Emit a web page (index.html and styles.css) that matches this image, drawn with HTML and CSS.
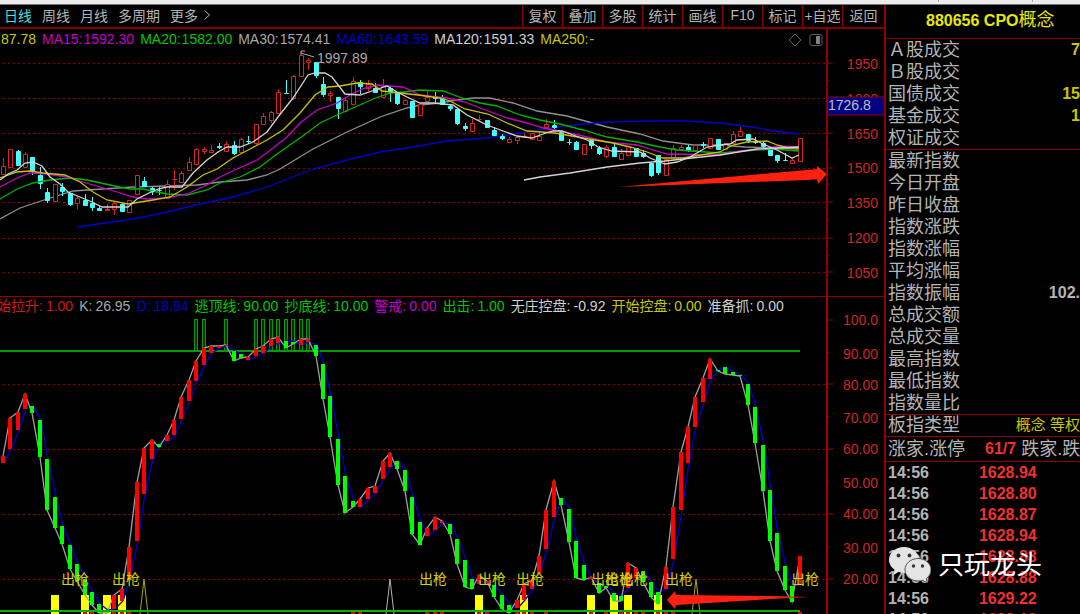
FILE: index.html
```html
<!DOCTYPE html>
<html lang="zh-CN">
<head>
<meta charset="utf-8">
<title>880656 CPO概念</title>
<link rel="stylesheet" href="styles.css">
</head>
<body>
<div class="app">
  <div class="strip"><i></i><i></i></div>
  <div class="workspace">
    <main class="charts">
      <div class="toolbar">
        <nav class="periods">
          <button class="period active">日线</button>
          <button class="period">周线</button>
          <button class="period">月线</button>
          <button class="period">多周期</button>
          <button class="period more">更多<svg class="chevron" viewBox="0 0 8 12"><path d="M1.500 1.500 6.500 6 1.500 10.500"/></svg></button>
        </nav>
        <div class="tools">
          <button>复权</button><button>叠加</button><button>多股</button><button>统计</button><button>画线</button><button>F10</button><button>标记</button><button>+自选</button><button>返回</button>
        </div>
      </div>

      <section class="panel price">
        <div class="plot">
          <div class="legend ma">
            <span class="c-yellow">87.78</span>
            <span class="c-magenta">MA15:<b>1592.30</b></span>
            <span class="c-green">MA20:<b>1582.00</b></span>
            <span class="c-gray">MA30:<b>1574.41</b></span>
            <span class="c-blue">MA60:<b>1643.59</b></span>
            <span class="c-white">MA120:<b>1591.33</b></span>
            <span class="c-yellow">MA250:<b>-</b></span>
            <svg class="legend-icons" viewBox="0 0 36 14"><path d="M7 1 13 7 7 13 1 7z"/><rect x="22" y="1.500" width="12" height="11" rx="2"/><rect class="fill" x="28" y="3" width="4" height="8"/></svg>
          </div>
          <svg class="chart" viewBox="0 49 826 247">
            <g id="price-grid" class="grid"></g>
            <polyline class="ma30" points="0,219 20,208 47,199 73,191 103,189 133,187 167,186 197,185 220,182 247,180 267,175 280,169 313,149 347,132 380,117 407,108 420,105 440,103 457,100 473,98 490,98 513,103 537,111 567,116 607,127 640,134 663,141 693,145 720,145 745,147 799,149"/>
            <polyline class="ma60" points="77,227 133,219 167,212 200,204 233,197 267,187 280,182 313,169 347,160 380,152 413,147 447,141 487,138 520,133 563,126 607,122 647,121 687,121 720,123 753,127 773,131 799,134"/>
            <g id="candles"></g>
            <polyline class="ma20" points="0,199 17,189 33,183 50,180 70,178 87,180 110,185 130,189 143,189 167,194 187,195 207,190 220,183 240,177 260,167 277,154 300,138 320,123 337,115 353,108 373,99 390,93 403,92 420,90 443,91 462,98 480,103 497,106 520,115 540,120 560,124 583,130 607,137 637,142 660,147 677,150 720,153 743,151 773,149 799,151"/>
            <polyline class="ma15" points="0,187 17,178 30,173 47,174 67,177 83,182 100,187 117,192 133,197 147,199 167,198 187,194 207,185 220,177 237,169 257,160 273,148 287,137 300,123 317,110 337,103 350,95 362,89 377,85 403,87 420,95 447,98 465,102 480,108 507,118 527,123 543,128 560,131 583,136 607,142 637,145 650,149 667,154 720,155 740,151 760,149 780,146 799,147"/>
            <polyline class="ma10" points="0,178 17,172 30,171 43,173 65,175 80,182 93,192 107,200 128,204 153,200 170,197 187,187 203,175 217,169 233,158 250,149 267,140 283,130 300,113 315,95 328,87 340,86 357,83 372,84 382,91 400,93 418,95 440,98 450,101 465,109 488,114 507,123 527,131 555,133 583,138 613,143 630,147 647,152 663,158 683,158 720,152 733,145 747,142 767,141 777,145 788,148 799,148"/>
            <polyline class="ma5" points="0,180 8,174 17,170 25,163 33,162 42,166 50,177 60,184 68,192 80,197 92,202 102,207 128,207 137,199 147,194 158,189 167,187 182,187 193,173 207,160 218,152 227,147 240,147 253,142 267,132 278,117 293,98 308,75 315,73 325,73 332,77 345,94 360,95 375,90 387,86 397,92 407,97 420,103 433,103 453,105 467,115 487,125 503,131 517,136 532,138 543,134 553,131 562,131 573,135 587,140 598,147 612,151 640,152 650,158 665,164 677,162 690,157 707,147 720,145 730,144 737,140 753,139 763,144 777,150 792,158 799,155"/>
            <polyline class="ma120" points="524,180 540,177 570,173 607,167 640,163 665,161 683,159 720,155 757,149 799,147"/>
            <path class="pointer" d="M314 57 301 53M305 51H301V55"/>
            <text class="peak" x="317" y="63">1997.89</text>
            <path class="arrow" d="M618 187 807 170 817 169 817 166 827 174 818 184 817 179 807 180z"/>
          </svg>
        </div>
        <svg class="axis" viewBox="828 29 56 267">
          <path d="M828 63h5M828 98h5M828 133h5M828 168h5M828 202h5M828 238h5M828 272h5M828 81h2M828 115h2M828 150h2M828 185h2M828 220h2M828 255h2"/>
          <text x="878" y="69">1950</text><text x="878" y="104">1800</text><text x="878" y="139">1650</text><text x="878" y="173">1500</text><text x="878" y="208">1350</text><text x="878" y="243">1200</text><text x="878" y="278">1050</text>
          <rect class="tag" x="827" y="97" width="60" height="18"/>
          <text class="tag-text" x="828" y="110">1726.8</text>
        </svg>
      </section>

      <section class="panel signal">
        <div class="plot">
          <div class="legend kd">
            <span class="c-red">始拉升:<b>1.00</b></span>
            <span class="c-gray">K:<b>26.95</b></span>
            <span class="c-blue">D:<b>18.94</b></span>
            <span class="c-green">逃顶线:<b>90.00</b></span>
            <span class="c-green">抄底线:<b>10.00</b></span>
            <span class="c-magenta">警戒:<b>0.00</b></span>
            <span class="c-green">出击:<b>1.00</b></span>
            <span class="c-white">无庄控盘:<b>-0.92</b></span>
            <span class="c-yellow">开始控盘:<b>0.00</b></span>
            <span class="c-white">准备抓:<b>0.00</b></span>
          </div>
          <svg class="chart" viewBox="0 317 826 297">
            <g id="signal-grid" class="grid"></g>
            <g id="warnings" class="warnings"></g>
            <path class="limit" d="M0 351H800"/>
            <g id="blocks" class="blocks"></g>
            <path class="spike" d="M140 614 144 579 148 614M692 614 696 579 700 614"/>
            <path class="spike white" d="M386 614 390 579 394 614"/>
            <g id="marks" class="marks"></g>
            <polyline id="d-line" class="d-line"/>
            <polyline id="k-line" class="k-line"/>
            <g id="bars"></g>
            <path class="limit low" d="M0 611H800"/>
            <g id="shots" class="shots"></g>
            <path class="arrow" d="M667 600 675 591 676 595 770 596 809 597 770 599 676 605 675 609z"/>
          </svg>
        </div>
        <svg class="axis" viewBox="828 297 56 317">
          <path d="M828 320h5M828 384h5M828 449h5M828 514h5M828 579h5M828 353h2M828 417h2M828 482h2M828 547h2"/>
          <text x="878" y="325">100.0</text><text x="878" y="359">90.00</text><text x="878" y="390">80.00</text><text x="878" y="423">70.00</text><text x="878" y="454">60.00</text><text x="878" y="488">50.00</text><text x="878" y="519">40.00</text><text x="878" y="553">30.00</text><text x="878" y="584">20.00</text>
        </svg>
      </section>
    </main>

    <aside class="side">
      <h1 class="title">880656 CPO<span>概念</span></h1>
      <dl class="quotes">
        <div><dt>Ａ股成交</dt><dd class="c-yellow">7</dd></div>
        <div><dt>Ｂ股成交</dt><dd></dd></div>
        <div><dt>国债成交</dt><dd class="c-yellow">15</dd></div>
        <div><dt>基金成交</dt><dd class="c-yellow">1</dd></div>
        <div><dt>权证成交</dt><dd></dd></div>
      </dl>
      <dl class="quotes">
        <div><dt>最新指数</dt><dd></dd></div>
        <div><dt>今日开盘</dt><dd></dd></div>
        <div><dt>昨日收盘</dt><dd></dd></div>
        <div><dt>指数涨跌</dt><dd></dd></div>
        <div><dt>指数涨幅</dt><dd></dd></div>
        <div><dt>平均涨幅</dt><dd></dd></div>
        <div><dt>指数振幅</dt><dd>102.</dd></div>
        <div><dt>总成交额</dt><dd></dd></div>
        <div><dt>总成交量</dt><dd></dd></div>
        <div><dt>最高指数</dt><dd></dd></div>
        <div><dt>最低指数</dt><dd></dd></div>
        <div><dt>指数量比</dt><dd></dd></div>
      </dl>
      <dl class="quotes kind">
        <div><dt>板指类型</dt><dd class="c-yellow">概念 等权</dd></div>
      </dl>
      <div class="breadth"><span>涨家.涨停</span><strong>61/7</strong><span>跌家.跌</span></div>
      <div class="ticks">
        <table>
          <tr><td>14:56</td><td>1628.94</td></tr>
          <tr><td>14:56</td><td>1628.80</td></tr>
          <tr><td>14:56</td><td>1628.87</td></tr>
          <tr><td>14:56</td><td>1628.94</td></tr>
          <tr><td>14:56</td><td>1628.88</td></tr>
          <tr><td>14:56</td><td>1628.88</td></tr>
          <tr><td>14:56</td><td>1629.22</td></tr>
          <tr><td>14:56</td><td>1629.13</td></tr>
        </table>
      </div>
      <div class="watermark">
        <svg viewBox="0 0 42 36"><path class="bubble" d="M15 0C6.500 0 0 5.500 0 12.800c0 4.200 2.200 7.600 5.500 10L4.200 28l5.300-2.900c1.800.5 3.500.8 5.500.8 8.400 0 15-5.800 15-13S23.400 0 15 0z"/><path class="bubble front" d="M29 11.500c-7.200 0-13 5-13 11.300 0 6.200 5.800 11.200 13 11.200 1.600 0 3-.3 4.500-.7L38.500 36l-1.300-4.300c3-2.200 4.800-5.300 4.800-8.900 0-6.300-5.800-11.300-13-11.300z"/><g class="eyes"><circle cx="9.500" cy="8.500" r="1.900"/><circle cx="20.500" cy="8.500" r="1.900"/><circle cx="24.500" cy="19" r="1.700"/><circle cx="33.500" cy="19" r="1.700"/></g></svg>
        <span>只玩龙头</span>
      </div>
    </aside>
  </div>
</div>
<script src="chart.js"></script>
</body>
</html>
```
FILE: styles.css
```css
* { box-sizing: border-box; }

body {
  margin: 0;
  background: #000;
  color: #b4b4b4;
  font-family: "Liberation Sans", "Noto Sans CJK SC", sans-serif;
  font-size: 14px;
}

button {
  padding: 0;
  border: 0;
  background: none;
  color: inherit;
  font: inherit;
  white-space: nowrap;
}

.app {
  display: flex;
  flex-direction: column;
  height: 100vh;
  overflow: hidden;
}

.strip {
  display: flex;
  justify-content: flex-end;
  gap: 93px;
  height: 5px;
  flex: none;
  padding-right: 47px;
  background: #ececec;
  border-bottom: 1px solid #777;
}
.strip i { width: 1px; height: 2px; background: #aaa; }

.workspace { display: flex; flex: 1; min-height: 0; }
.charts { flex: 1; min-width: 0; }

.toolbar {
  display: flex;
  justify-content: space-between;
  height: 24px;
  border-bottom: 2px solid #800000;
}
.periods { display: flex; gap: 10px; padding-left: 4px; }
.periods button, .tools button { padding-bottom: 2px; }
.period.active { color: #4fdede; }
.periods .more { display: flex; align-items: center; gap: 5px; }
.chevron { width: 8px; height: 12px; fill: none; stroke: #b4b4b4; }
.tools { display: flex; }
.tools button { width: 40px; border-left: 1px solid #900000; }
.tools button:last-child { width: 42px; }

.panel { display: flex; }
.price { border-bottom: 1px solid #900000; }
.plot { flex: 1; min-width: 0; }
.chart { display: block; width: 100%; height: auto; }
.axis {
  display: block;
  flex: none;
  box-sizing: content-box;
  width: 56px;
  border-left: 2px solid #900000;
}
.signal .axis { border-color: #a80000; }
.axis path { fill: none; stroke: #900000; }
.axis text { fill: #cc2626; text-anchor: end; }
.axis .tag { fill: #000084; stroke: #900000; }
.axis .tag-text { fill: #c0c0c0; text-anchor: start; }

.legend {
  display: flex;
  gap: 6px;
  height: 20px;
  line-height: 20px;
  white-space: nowrap;
  overflow: hidden;
}
.legend b { font-weight: 400; }
.ma { padding-left: 1px; }
.ma b { margin-left: 1px; }
.kd { line-height: 18px; }
.kd b { margin-left: 3px; }
.kd span:first-child { margin-left: -3px; }
.legend-icons {
  width: 36px;
  height: 14px;
  margin: 4px 2px 0 auto;
  fill: none;
  stroke: #606060;
}
.legend-icons .fill { fill: #808080; stroke: none; }

.c-yellow { color: #c8c800; }
.c-magenta { color: #c800c8; }
.c-green { color: #00c800; }
.c-gray { color: #a8a8a8; }
.c-blue { color: #0000c8; }
.c-white { color: #d0d0d0; }
.c-red { color: #d01818; }

polyline { fill: none; stroke-width: 1.3; }
.grid path { stroke: #980000; stroke-dasharray: 2 3; }
.ma5 { stroke: #d4d4d4; }
.ma10 { stroke: #c4c400; }
.ma15 { stroke: #c800c8; }
.ma20 { stroke: #00b400; }
.ma30 { stroke: #909090; }
.ma60 { stroke: #0000d0; }
.ma120 { stroke: #d4d4d4; }
.candle-up { fill: #000; stroke: #d82424; }
.candle-down { fill: #4ff; stroke: #4ff; }
.pointer { fill: none; stroke: #aaa; }
.peak { fill: #a8a8a8; }
.arrow { fill: #ff2010; }

.limit { fill: none; stroke: #009c00; stroke-width: 2; }
.limit.low { stroke: #00b400; }
.warnings rect { fill: #003000; stroke: #00a000; }
.blocks rect { fill: #ff0; }
.marks rect { fill: #d01010; }
.spike { fill: none; stroke: #a8a800; }
.spike.white { stroke: #b4b4b4; }
.k-line { stroke: #a0a0a0; }
.d-line { stroke: #0000d0; }
.bar-up { fill: #f00; }
.bar-down { fill: #0f0; }
.shots text { fill: #d2d200; }

.side {
  position: relative;
  display: flex;
  flex-direction: column;
  flex: none;
  width: 196px;
  border-left: 2px solid #900000;
  overflow: hidden;
}
.title {
  margin: 0;
  padding-left: 40px;
  height: 34px;
  flex: none;
  border-bottom: 1px solid #800000;
  color: #e8e800;
  font-size: 16px;
  line-height: 30px;
  white-space: nowrap;
}
.title span { font-size: 18px; font-weight: 400; }
.quotes {
  margin: 0;
  padding-left: 2px;
  border-bottom: 1px solid #900000;
  font-size: 18px;
}
.quotes div { display: flex; justify-content: space-between; height: 22px; line-height: 22px; }
.quotes dd { margin: 0; font-size: 16px; font-weight: 700; }
.kind div { height: 21px; line-height: 20px; }
.kind dd { font-size: 15px; font-weight: 400; }
.breadth {
  display: flex;
  padding-left: 2px;
  flex: none;
  height: 25px;
  border-bottom: 1px solid #900000;
  font-size: 18px;
  line-height: 24px;
  white-space: nowrap;
}
.breadth strong { margin: 0 5px 0 20px; color: #f03030; font-size: 16px; }
.ticks { flex: 1; min-height: 0; overflow: hidden; }
.ticks table { border-collapse: collapse; font-size: 16px; font-weight: 700; line-height: 21px; }
.ticks td { padding: 0 0 0 2px; }
.ticks td + td { padding-left: 50px; color: #f03030; }

.watermark {
  position: absolute;
  right: 38px;
  bottom: 31px;
  display: flex;
  align-items: center;
  gap: 7px;
  color: #fff;
  font-size: 26px;
  line-height: 36px;
  white-space: nowrap;
}
.watermark svg { width: 42px; height: 36px; }
.bubble { fill: #e4e4e4; }
.front { stroke: #555; }
.eyes { fill: #333; }
```
FILE: chart.js
```js
const NS = 'http://www.w3.org/2000/svg';
const xAt = i => Math.round(2.6 + i * 7.45);

function add(id, tag, attrs, text) {
  const el = document.createElementNS(NS, tag);
  for (const key in attrs) el.setAttribute(key, attrs[key]);
  if (text) el.textContent = text;
  document.getElementById(id).appendChild(el);
}

[63, 98, 133, 168, 202, 238, 272].forEach(y => add('price-grid', 'path', { d: `M3 ${y}.5H826` }));
[384, 449, 514, 579].forEach(y => add('signal-grid', 'path', { d: `M3 ${y}.5H826` }));

// Each candle: direction, body top, body bottom, high, low.
const candles = `u166-174-158-174 u149-167-149-167 d151-165-150-166 u154-167-152-167 d157-171-157-175 d175-183-167-189
d192-200-188-203 u184-201-184-201 d187-191-183-196 d193-204-193-206 u198-203-196-209 d200-205-194-205 d203-207-197-211
d208-210-206-210 u209-210-204-211 u203-209-202-215 d204-211-203-212 u200-212-200-212 u175-194-175-194 d181-186-177-186
d188-191-187-195 d190-190-187-195 u184-198-180-199 u179-179-170-190 u173-182-171-182 u162-170-157-170 u149-164-148-164
u149-151-147-154 u150-152-145-152 d146-147-143-149 u144-151-141-151 d145-153-141-155 u139-152-138-153 d141-141-136-144
u124-143-124-145 u116-124-113-124 u112-120-111-123 u92-113-89-113 d93-93-80-94 u76-98-75-100 u55-76-55-76 u60-62-58-70
d62-75-62-78 d84-94-77-97 u93-95-91-102 d97-108-97-119 u100-111-97-112 u81-104-77-104 d82-86-80-94 u84-88-80-91
d88-92-83-93 u86-97-79-97 d88-91-86-102 d92-103-92-105 u100-104-99-104 d101-117-101-117 u104-115-104-115 u97-101-91-101
d96-98-92-103 d98-104-95-104 d106-108-104-111 d109-123-108-125 d126-128-123-131 u123-131-119-131 u119-119-115-121
d120-127-120-128 d130-135-127-135 d136-138-134-140 u139-142-137-142 u137-140-136-144 u136-137-134-138 u133-139-133-140
u136-140-131-140 u124-127-119-127 d125-127-120-129 d132-140-130-140 d142-142-139-145 d142-149-141-150 u144-154-144-154
d140-145-138-149 d148-153-146-155 u147-156-145-158 d147-156-144-156 u153-159-149-159 u146-155-146-155 d148-156-148-156
d153-156-150-158 d163-175-163-177 d155-172-155-175 u159-175-159-175 u148-157-145-157 u147-149-145-149 d147-150-145-152
u145-150-145-150 d144-145-142-148 u138-148-138-148 d139-149-139-149 u143-149-143-149 u134-143-131-143 u131-136-127-136
d134-140-134-143 d141-142-137-144 d143-146-141-150 d149-155-149-155 d155-160-155-163 d160-160-153-161 u160-163-158-163
u138-161-138-161`.split(/\s+/);

candles.forEach((item, i) => {
  const [top, bottom, high, low] = item.slice(1).split('-').map(Number);
  const x = xAt(i);
  add('candles', 'path', {
    class: item[0] === 'u' ? 'candle-up' : 'candle-down',
    d: `M${x + .5} ${high}V${top}M${x + .5} ${bottom}V${low}M${x - 1.5} ${top + .5}h4V${bottom + .5}h-4z`
  });
});

// Each K/D bar: direction, top, bottom.
const bars = `u456-463 u418-449 u412-430 u394-409 d406-413 d420-457 d459-510 d497-528 d526-544 d545-569 d564-581 d579-595
d592-605 d604-613 d610-613 u595-609 u589-601 u547-580 u482-541 u448-494 u440-459 d444-447 u435-441 u420-435 u397-419
u380-401 u361-381 u348-365 u346-353 u346-348 u345-346 d351-361 d354-358 u357-360 u349-356 u346-353 u339-346 u337-343
d341-348 d342-344 u339-345 u339-342 d345-356 d364-399 d396-437 d439-485 d476-513 d501-507 u499-507 u488-499 u486-493
u461-479 u453-467 d461-469 d470-491 d497-534 d522-545 u528-536 u517-530 u521-523 d524-534 d539-564 d560-587 d579-589
u575-584 u581-583 d585-597 d595-609 d605-613 u600-608 u584-600 u580-589 u556-574 u510-549 u481-517 d498-505 d509-542
d541-578 d565-580 u577-579 d583-593 d586-588 d593-601 d596-601 u563-588 u568-578 d571-582 d582-597 d592-604 u567-589
u507-559 u452-510 u427-463 u397-427 u378-402 u359-379 d370-371 d367-374 d372-375 d375-376 d384-405 d407-443 d445-491
d490-541 d533-571 d566-590 d586-602 u556-584`.split(/\s+/);

const k = [], d = [];
bars.forEach((item, i) => {
  const up = item[0] === 'u';
  const [top, bottom] = item.slice(1).split('-').map(Number);
  const x = xAt(i);
  k.push(`${x},${up ? top : bottom}`);
  d.push(`${x + 1},${up ? bottom : top}`);
  add('bars', 'rect', { class: up ? 'bar-up' : 'bar-down', x: x - 2, y: top, width: 4, height: bottom - top });
});
document.getElementById('k-line').setAttribute('points', k.join(' '));
document.getElementById('d-line').setAttribute('points', d.join(' '));

[26, 27, 30, 34, 35, 36, 37, 38, 39, 40, 41].forEach(i =>
  add('warnings', 'rect', { x: xAt(i) - 1.5, y: 319.5, width: 3, height: 32 }));
[7, 11, 14, 16, 64, 70, 79, 82, 84, 88].forEach(i =>
  add('blocks', 'rect', { x: xAt(i) - 4, y: 595, width: 8, height: 19 }));
[11, 12, 15, 16, 17, 47, 48, 57, 58, 59, 64, 65, 69, 70, 71, 73, 79, 81, 83, 84, 85, 86, 88, 89, 90, 107].forEach(i =>
  add('marks', 'rect', { x: xAt(i) - 2, y: 612, width: 4, height: 2 }));
[61, 112, 419, 478, 516, 591, 605, 620, 665, 791].forEach(x =>
  add('shots', 'text', { x, y: 584 }, '出枪'));
```
